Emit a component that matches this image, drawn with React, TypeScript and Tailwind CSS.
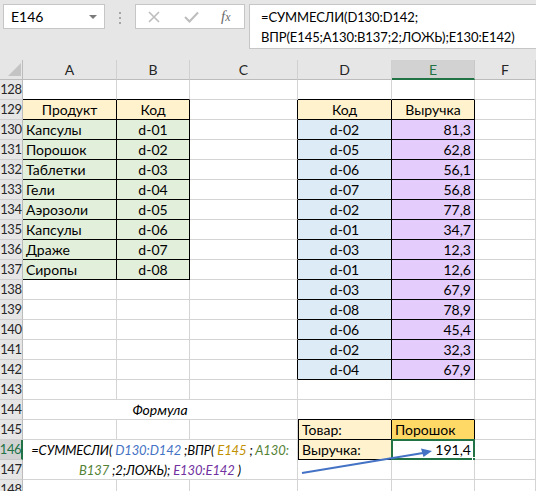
import React from "react";

type CellSpec = {
  text?: React.ReactNode;
  bg?: string;
  align?: "l" | "c" | "r";
  rb?: boolean;
  bb?: boolean;
  lb?: boolean;
  span?: string;
  extra?: string;
  selected?: boolean;
};

const COLS = ["A", "B", "C", "D", "E", "F"];

const products = ["Капсулы", "Порошок", "Таблетки", "Гели", "Аэрозоли", "Капсулы", "Драже", "Сиропы"];
const codes = ["d-01", "d-02", "d-03", "d-04", "d-05", "d-06", "d-07", "d-08"];
const sales: [string, string][] = [
  ["d-02", "81,3"],
  ["d-05", "62,8"],
  ["d-06", "56,1"],
  ["d-07", "56,8"],
  ["d-02", "77,8"],
  ["d-01", "34,7"],
  ["d-03", "12,3"],
  ["d-01", "12,6"],
  ["d-03", "67,9"],
  ["d-08", "78,9"],
  ["d-06", "45,4"],
  ["d-02", "32,3"],
  ["d-04", "67,9"],
];

const alignClass = {
  l: "justify-start",
  c: "justify-center",
  r: "justify-end",
};

function Cell({ spec }: { spec: CellSpec }) {
  return (
    <div
      className={[
        "relative flex items-center whitespace-nowrap px-[3px] text-black border-r border-b",
        spec.rb ? "border-r-black" : "border-r-[#d4d4d4]",
        spec.bb ? "border-b-black" : "border-b-[#d4d4d4]",
        spec.lb ? "border-l border-l-black" : "",
        alignClass[spec.align ?? "l"],
        spec.bg ?? "bg-white",
        spec.span ?? "",
        spec.extra ?? "text-[14px]",
      ].join(" ")}
    >
      {spec.text}
      {spec.selected && (
        <>
          <div className="pointer-events-none absolute -left-[1px] -top-[1px] h-[21px] w-[84px] border-2 border-[#217346]" />
          <div className="absolute -bottom-[4px] -right-[4px] h-[6px] w-[6px] border border-white bg-[#217346]" />
        </>
      )}
    </div>
  );
}

function cellFor(row: number, col: string): CellSpec | null {
  const t1 = row >= 130 && row <= 137;
  const t2 = row >= 130 && row <= 142;
  // merged areas
  if (row === 144 && (col === "B" || col === "C")) return null;
  if (row === 146 && (col === "B" || col === "C")) return null;
  if (row === 147 && (col === "A" || col === "B" || col === "C")) return null;

  if (col === "A") {
    if (row === 128) return { bb: true };
    if (row === 129) return { text: "Продукт", align: "c", bg: "bg-[#fff2cc]", rb: true, bb: true };
    if (t1) return { text: products[row - 130], bg: "bg-[#e2efda]", rb: true, bb: true };
    if (row === 144) return { text: "Формула", align: "c", span: "col-span-3", extra: "text-[14px] italic" };
    if (row === 146)
      return {
        span: "col-span-3 row-span-2",
        align: "c",
        extra: "flex-col !justify-center italic text-[13px] tracking-[-0.1px] leading-[20px]",
        text: (
          <>
            <span>
              =СУММЕСЛИ( <span className="text-[#4472c4]">D130:D142</span> ;ВПР({" "}
              <span className="text-[#bf9000]">E145</span> ;{" "}
              <span className="text-[#548235]">A130:</span>
            </span>
            <span>
              <span className="text-[#548235]">B137</span> ;2;ЛОЖЬ);{" "}
              <span className="text-[#7030a0]">E130:E142</span> )
            </span>
          </>
        ),
      };
    return {};
  }
  if (col === "B") {
    if (row === 128) return { bb: true };
    if (row === 129) return { text: "Код", align: "c", bg: "bg-[#fff2cc]", rb: true, bb: true };
    if (t1) return { text: codes[row - 130], align: "c", bg: "bg-[#e2efda]", rb: true, bb: true };
    return {};
  }
  if (col === "C") {
    if (row >= 129 && row <= 142) return { rb: true };
    return {};
  }
  if (col === "D") {
    if (row === 128 || row === 144) return { bb: true };
    if (row === 129) return { text: "Код", align: "c", bg: "bg-[#fff2cc]", rb: true, bb: true };
    if (t2) return { text: sales[row - 130][0], align: "c", bg: "bg-[#ddebf7]", rb: true, bb: true };
    if (row === 145) return { text: "Товар:", bg: "bg-[#fff2cc]", rb: true, bb: true, lb: true };
    if (row === 146) return { text: "Выручка:", bg: "bg-[#fff2cc]", rb: true, bb: true, lb: true };
    return {};
  }
  if (col === "E") {
    if (row === 128 || row === 144) return { bb: true };
    if (row === 129) return { text: "Выручка", align: "c", bg: "bg-[#fff2cc]", rb: true, bb: true };
    if (t2) return { text: sales[row - 130][1], align: "r", bg: "bg-[#e4ccfc]", rb: true, bb: true };
    if (row === 145) return { text: "Порошок", bg: "bg-[#ffd966]", rb: true, bb: true };
    if (row === 146) return { text: "191,4", align: "r", rb: true, bb: true, selected: true };
    return {};
  }
  return {};
}

function FormulaBar() {
  return (
    <div className="flex h-[60px] items-start bg-[#e6e6e6] pl-[3px] pt-[4px]">
      {/* name box */}
      <div className="flex h-[25px] w-[102px] items-center justify-between border border-[#c6c6c6] bg-white pl-[7px] pr-[7px] text-[14px] text-black">
        <span>E146</span>
        <span className="h-0 w-0 border-x-[4px] border-t-[4px] border-x-transparent border-t-[#7a7a7a]" />
      </div>
      {/* grip */}
      <div className="flex w-[30px] flex-col items-center gap-[3px] pt-[8px]">
        <span className="h-[2px] w-[2px] bg-[#a6a6a6]" />
        <span className="h-[2px] w-[2px] bg-[#a6a6a6]" />
        <span className="h-[2px] w-[2px] bg-[#a6a6a6]" />
      </div>
      {/* cancel / enter / fx */}
      <div className="flex h-[25px] w-[110px] items-center border border-[#c6c6c6] bg-white pl-[12px]">
        <svg width="12" height="12" viewBox="0 0 12 12" className="text-[#bdbdbd]">
          <path d="M1 1 L11 11 M11 1 L1 11" stroke="currentColor" strokeWidth="1.6" fill="none" />
        </svg>
        <svg width="15" height="12" viewBox="0 0 15 12" className="ml-[24px] text-[#bdbdbd]">
          <path d="M1 6 L5.5 10.5 L14 1.5" stroke="currentColor" strokeWidth="2" fill="none" />
        </svg>
        <span className="ml-[22px] font-['Liberation_Serif',serif] text-[15px] italic leading-none text-[#6b6b6b]">
          f<span className="text-[12px]">x</span>
        </span>
      </div>
      {/* formula */}
      <div className="ml-[4px] flex h-[45px] flex-1 flex-col justify-center border border-r-0 border-[#c6c6c6] bg-white pl-[11px] text-[13px] leading-[20px] tracking-[-0.1px] text-black">
        <span>=СУММЕСЛИ(D130:D142;</span>
        <span>ВПР(E145;A130:B137;2;ЛОЖЬ);E130:E142)</span>
      </div>
    </div>
  );
}

export default function App() {
  const rows = Array.from({ length: 21 }, (_, i) => 128 + i);

  return (
    <div className="relative h-[491px] w-[536px] overflow-hidden bg-white font-['Lato',sans-serif]">
      <FormulaBar />

      <div className="grid grid-cols-[23px_94px_73px_108px_94px_83px_61px] auto-rows-[20px]">
        {/* select-all corner */}
        <div className="relative border-b border-r border-b-[#bcbcbc] border-r-[#bcbcbc] bg-[#e6e6e6]">
          <svg width="23" height="20" viewBox="0 0 23 20" className="absolute left-0 top-0">
            <polygon points="21,3 21,16 8,16" fill="#c4c4c4" />
          </svg>
        </div>
        {COLS.map((c) => (
          <div
            key={c}
            className={
              c === "E"
                ? "flex items-center justify-center border-r border-r-[#c8c8c8] border-b-2 border-b-[#217346] bg-[#d2d2d2] text-[14px] text-[#217346]"
                : "flex items-center justify-center border-r border-b border-r-[#d0d0d0] border-b-[#bcbcbc] bg-[#e6e6e6] text-[14px] text-[#262626]"
            }
          >
            {c}
          </div>
        ))}

        {rows.map((r) => (
          <React.Fragment key={r}>
            <div
              className={
                r === 146
                  ? "flex items-center justify-center border-b border-r-2 border-b-[#c8c8c8] border-r-[#217346] bg-[#d2d2d2] text-[13px] tracking-[-0.3px] text-[#217346]"
                  : "flex items-center justify-center border-b border-r border-b-[#d0d0d0] border-r-[#bcbcbc] bg-[#e6e6e6] text-[13px] tracking-[-0.3px] text-[#262626]"
              }
            >
              {r}
            </div>
            {COLS.map((c) => {
              const spec = cellFor(r, c);
              if (!spec) return null;
              return <Cell key={c} spec={spec} />;
            })}
          </React.Fragment>
        ))}
      </div>

      {/* arrow from the formula to the result */}
      <svg className="pointer-events-none absolute left-0 top-0" width="536" height="491" viewBox="0 0 536 491">
        <line x1="302" y1="473" x2="423" y2="453" stroke="#4472c4" strokeWidth="2" />
        <polygon points="432,451 421,448.5 423.5,457" fill="#4472c4" />
      </svg>
    </div>
  );
}
